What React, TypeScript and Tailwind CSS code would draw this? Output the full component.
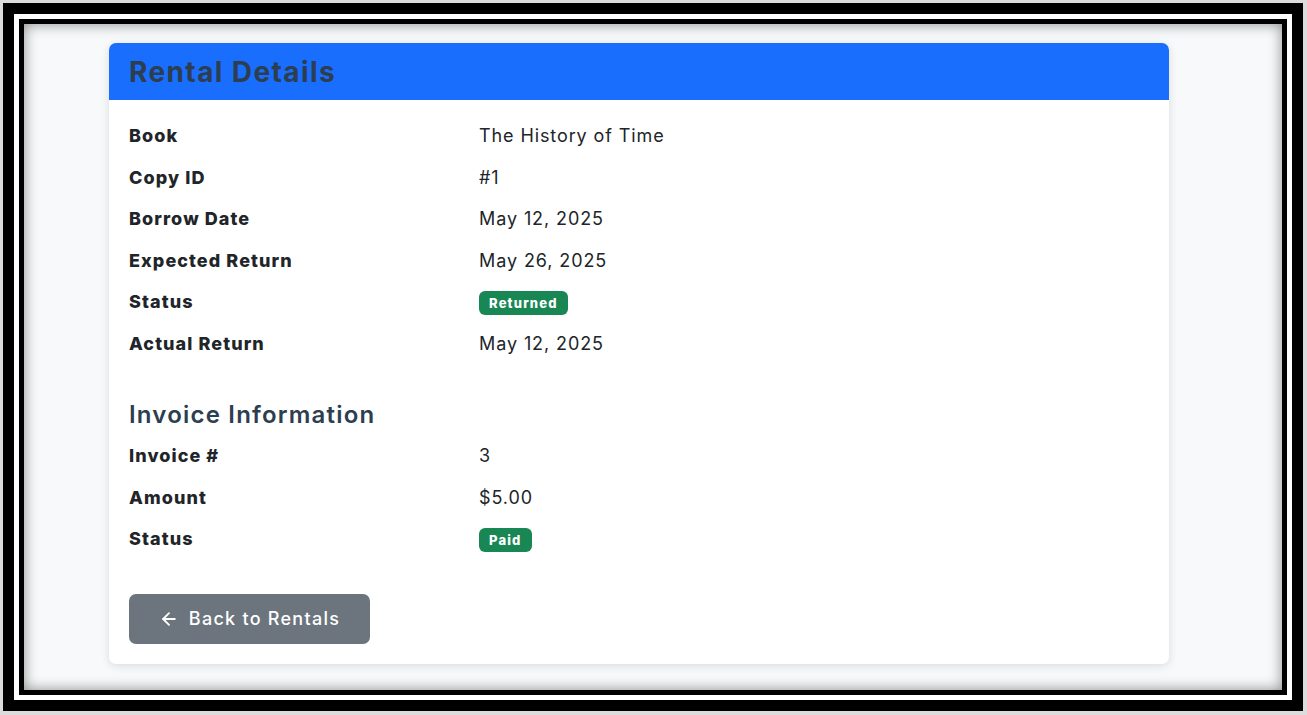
import { ArrowLeft } from 'lucide-react';

const rental = [
  { label: 'Book', value: 'The History of Time' },
  { label: 'Copy ID', value: '#1' },
  { label: 'Borrow Date', value: 'May 12, 2025' },
  { label: 'Expected Return', value: 'May 26, 2025' },
  { label: 'Status', badge: 'Returned' },
  { label: 'Actual Return', value: 'May 12, 2025' },
];

const invoice = [
  { label: 'Invoice #', value: '3' },
  { label: 'Amount', value: '$5.00' },
  { label: 'Status', badge: 'Paid' },
];

type Row = { label: string; value?: string; badge?: string };

function DetailRow({ row }: { row: Row }) {
  return (
    <div className="flex items-center h-[41.5px]">
      <div className="w-[350px] font-extrabold text-[18px] tracking-[0.06em] text-[#212529]">{row.label}</div>
      <div className="text-[18px] tracking-[0.05em] text-[#212529]">
        {row.badge ? (
          <span className="inline-block rounded-[6px] bg-[#198754] px-[10px] py-[4px] text-[13px] font-extrabold leading-[16px] tracking-[0.09em] text-white">
            {row.badge}
          </span>
        ) : (
          row.value
        )}
      </div>
    </div>
  );
}

export default function App() {
  return (
    <div
      className="h-[715px] w-[1307px] bg-[#dcdcdc] pt-[3px] pl-[3px] pr-[4px] pb-[4px]"
      style={{ fontFamily: 'Inter, "Noto Sans", sans-serif' }}
    >
      <div className="h-full border-[11px] border-black bg-white p-[5px]">
        <div className="h-full border-[5px] border-black">
          <div className="h-full bg-[#f8f9fa] pt-[19px] pl-[85px] shadow-[inset_0_0_14px_rgba(0,0,0,0.45)]">
            {/* Card */}
            <div className="w-[1060px] overflow-hidden rounded-[7px] bg-white shadow-[0_2px_10px_rgba(0,0,0,0.12)]">
              <div className="flex h-[57px] items-center bg-[#1a6efd] px-[20px]">
                <h1 className="text-[28px] font-bold tracking-[0.05em] text-[#2c3e50]">Rental Details</h1>
              </div>
              <div className="px-[20px] pt-[15px] pb-[20px]">
                {rental.map((r) => (
                  <DetailRow key={r.label} row={r} />
                ))}
                <h2 className="mt-[33px] mb-[2px] text-[24px] font-semibold tracking-[0.05em] text-[#2c3e50]">
                  Invoice Information
                </h2>
                {invoice.map((r) => (
                  <DetailRow key={r.label} row={r} />
                ))}
                <button className="mt-[34px] flex h-[50px] w-[241px] items-center justify-center gap-[10px] rounded-[7px] bg-[#6c757d] text-[18px] font-medium tracking-[0.07em] text-white">
                  <ArrowLeft size={20} strokeWidth={2.2} />
                  Back to Rentals
                </button>
              </div>
            </div>
          </div>
        </div>
      </div>
    </div>
  );
}
